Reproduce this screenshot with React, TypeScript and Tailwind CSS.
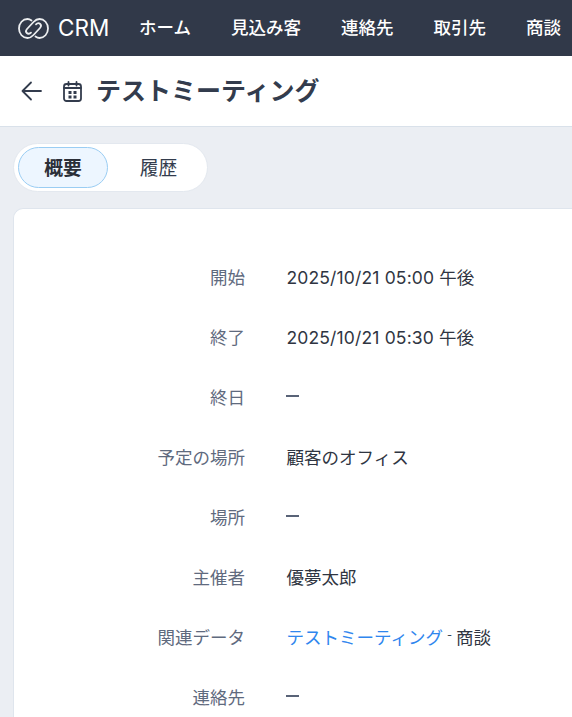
import React from "react";

function DateTime({ t }: { t: string }) {
  return (
    <span>
      <span className="tracking-[0.15px]">{t}</span> 午後
    </span>
  );
}

function Dash() {
  return <span className="block w-[13px] h-[2px] bg-[#596377] mt-[-3px] -ml-[0.5px]" />;
}

const rows: { label: string; value: React.ReactNode }[] = [
  { label: "開始", value: <DateTime t="2025/10/21 05:00" /> },
  { label: "終了", value: <DateTime t="2025/10/21 05:30" /> },
  { label: "終日", value: <Dash /> },
  { label: "予定の場所", value: "顧客のオフィス" },
  { label: "場所", value: <Dash /> },
  { label: "主催者", value: "優夢太郎" },
  {
    label: "関連データ",
    value: (
      <span className="flex items-center">
        <span className="text-[#2f86ee]">テストミーティング</span>
        <span className="mx-[4px] text-[#333c4d] relative -top-[3px] text-[11px]">-</span>
        <span>商談</span>
      </span>
    ),
  },
  { label: "連絡先", value: <Dash /> },
];

const nav = ["ホーム", "見込み客", "連絡先", "取引先", "商談"];

export default function App() {
  return (
    <div
      className="w-[572px] h-[717px] overflow-hidden bg-[#ebeef3] flex flex-col"
      style={{ fontFamily: 'Inter, "Noto Sans CJK JP", sans-serif' }}
    >
      <header className="h-14 shrink-0 bg-[#313949] flex items-center text-white">
        <div className="flex items-center pl-[18px] w-[139px] shrink-0">
          <svg width="31" height="21" viewBox="0 0 31 21" fill="none" stroke="#eceef0" strokeWidth="1.800" strokeLinecap="round" strokeLinejoin="round">
            <path d="M13.500 2.500C12.300 1.600 10.900 1 9.500 1 4.800 1 1 5.200 1 10.500S4.800 20 9.500 20c2.500 0 4.400-1.300 6-3l6.500-7c1.200-1.300 1.200-3 .2-4-1.100-1.100-2.900-1-4.200.3" />
            <path d="M17.500 18.500c1.200.9 2.600 1.500 4 1.500 4.700 0 8.500-4.200 8.500-9.500S26.200 1 21.500 1c-2.500 0-4.400 1.300-6 3L9 11c-1.200 1.300-1.200 3-.2 4 1.100 1.100 2.900 1 4.200-.3" />
          </svg>
          <span className="ml-[9px] text-[22.500px] leading-none">CRM</span>
        </div>
        <nav className="flex gap-[40px] text-[17.5px] font-medium whitespace-nowrap">
          {nav.map((n) => (
            <span key={n}>{n}</span>
          ))}
        </nav>
      </header>

      <div className="h-[71px] shrink-0 bg-white border-b border-[#d9e1ea] flex items-center pl-[21px] text-[#333c4d]">
        <svg width="21" height="20" viewBox="0 0 21 20" fill="none" stroke="#333c4d" strokeWidth="1.800" strokeLinecap="round" strokeLinejoin="round">
          <path d="M20 10H1.500M10 1.500 1.500 10 10 18.500" />
        </svg>
        <svg className="ml-[21px]" width="19" height="21" viewBox="0 0 19 21" fill="none" stroke="#333c4d" strokeWidth="1.800" strokeLinecap="round">
          <rect x="1" y="3" width="17" height="17" rx="2.500" />
          <path d="M1 7h17M5.500 1v3.500M13.500 1v3.500" />
          <rect x="5.500" y="10" width="3" height="3" fill="#333c4d" stroke="none" />
          <rect x="10.500" y="10" width="3" height="3" fill="#333c4d" stroke="none" />
          <rect x="5.500" y="14.500" width="3" height="3" fill="#333c4d" stroke="none" />
          <rect x="10.500" y="14.500" width="3" height="3" fill="#333c4d" stroke="none" />
        </svg>
        <h1 className="ml-[14px] text-[25px] font-bold leading-none whitespace-nowrap">テストミーティング</h1>
      </div>

      <div className="pl-[13px] flex-1 flex flex-col">
        <div className="mt-[16px] w-[195px] h-[49px] rounded-full bg-white border border-[#e3e8ef] flex items-center pl-[4px]">
          <div className="w-[90px] shrink-0 h-[41px] rounded-full bg-[#edf6ff] border border-[#9acdf3] flex items-center justify-center pt-[4px] text-[18.750px] font-bold text-[#2b2f38]">
            概要
          </div>
          <div className="w-[101px] shrink-0 pt-[4px] text-center text-[18.750px] text-[#333c4d]">履歴</div>
        </div>

        <div className="mt-[16px] flex-1 bg-white rounded-tl-[10px] border-l border-t border-[#dfe5ed] pt-[39px] w-[600px]">
          {rows.map((r) => (
            <div key={r.label} className="flex items-center h-[60px] text-[17.500px]">
              <div className="w-[231px] text-right text-[#5f6a7e] whitespace-nowrap shrink-0">{r.label}</div>
              <div className="ml-[41.500px] text-[#2f3542] whitespace-nowrap">{r.value}</div>
            </div>
          ))}
        </div>
      </div>
    </div>
  );
}
